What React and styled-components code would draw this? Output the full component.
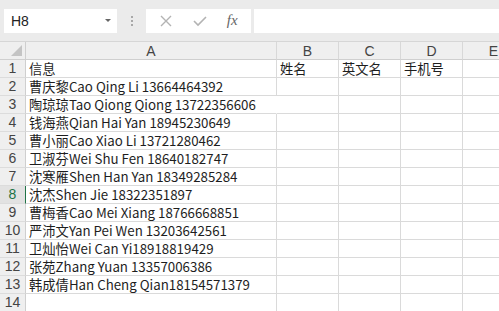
import styled, { createGlobalStyle } from "styled-components";

const GlobalStyle = createGlobalStyle`
    html, body {
        margin: 0;
        padding: 0;
        background: #ffffff;
        overflow: hidden;
    }
    body {
        font-family: "Noto Sans CJK SC", "Noto Sans", sans-serif;
    }
`

const Window = styled.div`
    width: 499px;
    height: 311px;
    overflow: hidden;
    background: #ffffff;
`

const Toolbar = styled.div`
    height: 42px;
    background: #ebebeb;
    border-bottom: 1px solid #d6d6d6;
    box-sizing: border-box;
    display: flex;
    align-items: center;
    padding: 0 0 0 4px;
`

const NameBox = styled.div`
    width: 113px;
    height: 24px;
    box-sizing: border-box;
    background: #ffffff;
    display: flex;
    align-items: center;
    justify-content: space-between;
    padding: 0 6px 0 7px;
    font-family: "Liberation Sans", sans-serif;
    font-size: 14px;
    color: #222;
`

const Caret = styled.span`
    width: 0;
    height: 0;
    border-left: 3px solid transparent;
    border-right: 3px solid transparent;
    border-top: 3px solid #666;
`

const Grip = styled.div`
    width: 29px;
    display: flex;
    flex-direction: column;
    align-items: center;
    gap: 2px;

    span {
        width: 2px;
        height: 2px;
        background: #a8a8a8;
    }
`

const ButtonsBox = styled.div`
    width: 105px;
    height: 24px;
    background: #ffffff;
    display: flex;
    align-items: center;
    justify-content: space-around;
    padding: 0 4px;
    box-sizing: border-box;
`

const Fx = styled.span`
    font-family: "Liberation Serif", serif;
    font-style: italic;
    font-size: 15px;
    color: #666;
`

const FormulaInput = styled.div`
    flex: 1;
    height: 24px;
    background: #ffffff;
    margin-left: 3px;
`

const Grid = styled.div`
    display: grid;
    grid-template-columns: 26px 251px 62px 62px 62px 62px;
    grid-auto-rows: 18px;
`

const Corner = styled.div`
    height: 17px;
    background: #efefef;
    border-right: 1px solid #cfcfcf;
    border-bottom: 1px solid #cfcfcf;
    position: relative;

    &::after {
        content: "";
        position: absolute;
        right: 3px;
        bottom: 3px;
        border-left: 11px solid transparent;
        border-bottom: 11px solid #c4c4c4;
    }
`

const ColHead = styled.div`
    height: 17px;
    background: #efefef;
    border-right: 1px solid #d8d8d8;
    border-bottom: 1px solid #cfcfcf;
    display: flex;
    align-items: flex-end;
    justify-content: center;
    font-family: "Liberation Sans", sans-serif;
    font-size: 14px;
    line-height: 16px;
    color: #444;
`

const RowHead = styled.div`
    background: ${(p) => (p.$active ? "#e2e2e2" : "#efefef")};
    border-right: 1px solid ${(p) => (p.$active ? "#217346" : "#cfcfcf")};
    border-bottom: 1px solid #dcdcdc;
    box-sizing: border-box;
    display: flex;
    align-items: center;
    justify-content: center;
    font-family: "Liberation Sans", sans-serif;
    font-size: 14px;
    line-height: 17px;
    color: ${(p) => (p.$active ? "#217346" : "#444")};
`

const Cell = styled.div`
    height: 18px;
    border-right: 1px solid ${(p) => (p.$spill ? "transparent" : "#dadada")};
    border-bottom: 1px solid #dadada;
    box-sizing: border-box;
    padding-left: 3px;
    font-size: 13.3px;
    line-height: 17px;
    color: #1e1e1e;
    white-space: nowrap;
    position: relative;
    z-index: ${(p) => (p.$text ? 1 : 0)};
    background: ${(p) => (p.$text ? "transparent" : "#ffffff")};
`

const rows = [
    ["信息", "姓名", "英文名", "手机号"],
    ["曹庆黎Cao Qing Li 13664464392"],
    ["陶琼琼Tao Qiong Qiong 13722356606"],
    ["钱海燕Qian Hai Yan 18945230649"],
    ["曹小丽Cao Xiao Li 13721280462"],
    ["卫淑芬Wei Shu Fen 18640182747"],
    ["沈寒雁Shen Han Yan 18349285284"],
    ["沈杰Shen Jie 18322351897"],
    ["曹梅香Cao Mei Xiang 18766668851"],
    ["严沛文Yan Pei Wen 13203642561"],
    ["卫灿怡Wei Can Yi18918819429"],
    ["张苑Zhang Yuan 13357006386"],
    ["韩成倩Han Cheng Qian18154571379"],
    [],
];

const XIcon = () => (
    <svg width="14" height="14" viewBox="0 0 14 14">
        <path d="M2 2 L12 12 M12 2 L2 12" stroke="#b3b3b3" strokeWidth="1.4" fill="none" />
    </svg>
);

const CheckIcon = () => (
    <svg width="16" height="14" viewBox="0 0 16 14">
        <path d="M2 7 L6 11 L14 3" stroke="#b3b3b3" strokeWidth="1.6" fill="none" />
    </svg>
);

export default function App() {
    return (
        <Window>
            <GlobalStyle />
            <Toolbar>
                <NameBox>
                    H8
                    <Caret />
                </NameBox>
                <Grip>
                    <span />
                    <span />
                    <span />
                </Grip>
                <ButtonsBox>
                    <XIcon />
                    <CheckIcon />
                    <Fx>fx</Fx>
                </ButtonsBox>
                <FormulaInput />
            </Toolbar>
            <Grid>
                <Corner />
                {["A", "B", "C", "D", "E"].map((c) => (
                    <ColHead key={c}>{c}</ColHead>
                ))}
                {rows.map((r, i) => {
                    const n = i + 1;
                    const spill = r.length === 1;
                    return [
                        <RowHead key={`h${n}`} $active={n === 8}>{n}</RowHead>,
                        ...[0, 1, 2, 3, 4].map((c) => (
                            <Cell
                                key={`${n}-${c}`}
                                $text={!!r[c]}
                                $spill={spill && c === 0 && r[0].length > 28}
                            >
                                {r[c] || ""}
                            </Cell>
                        )),
                    ];
                })}
            </Grid>
        </Window>
    );
}
